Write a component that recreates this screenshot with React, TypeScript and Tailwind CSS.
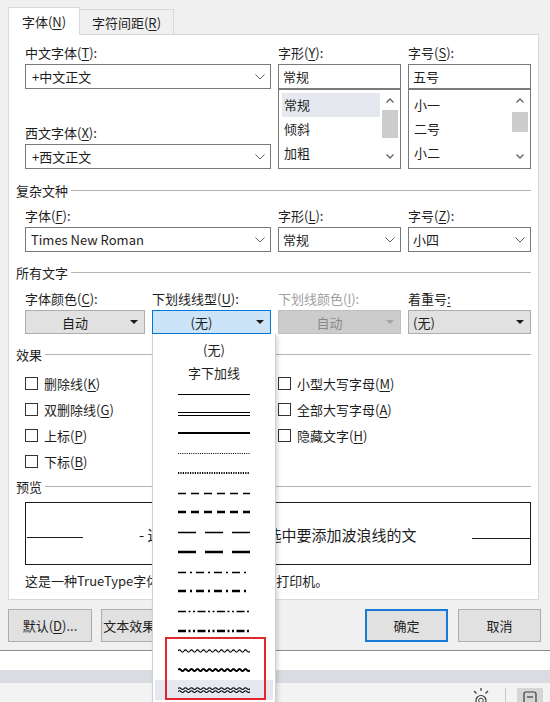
import React from 'react';

type Kind =
  | 'solid'
  | 'double'
  | 'thick'
  | 'dotted'
  | 'dottedHeavy'
  | 'dash'
  | 'dashHeavy'
  | 'long'
  | 'longHeavy'
  | 'dashDot'
  | 'dashDotHeavy'
  | 'dashDotDot'
  | 'dashDotDotHeavy'
  | 'wave'
  | 'waveHeavy'
  | 'waveDouble';

const kinds: Kind[] = [
  'solid',
  'double',
  'thick',
  'dotted',
  'dottedHeavy',
  'dash',
  'dashHeavy',
  'long',
  'longHeavy',
  'dashDot',
  'dashDotHeavy',
  'dashDotDot',
  'dashDotDotHeavy',
  'wave',
  'waveHeavy',
  'waveDouble',
];

// stroke width + dash pattern for the straight samples
const straight: Record<string, { w: number; y: number; d?: string }> = {
  solid: { w: 1, y: 4.5 },
  thick: { w: 2, y: 4 },
  dotted: { w: 1.2, y: 4.5, d: '1 1.2' },
  dottedHeavy: { w: 2, y: 4, d: '1.2 1.2' },
  dash: { w: 1.4, y: 4.5, d: '8 5' },
  dashHeavy: { w: 2.3, y: 4, d: '8 5' },
  long: { w: 1.4, y: 4.5, d: '18 9' },
  longHeavy: { w: 2.3, y: 4, d: '18 9' },
  dashDot: { w: 1.3, y: 4.5, d: '8 4 2 4' },
  dashDotHeavy: { w: 2.3, y: 4, d: '8 4 2 4' },
  dashDotDot: { w: 1.3, y: 4.5, d: '8 2.5 2 2.5 2 2.5' },
  dashDotDotHeavy: { w: 2.3, y: 4, d: '8 2.5 2 2.5 2 2.5' },
};

function wavePath(y: number, amp: number, period = 6, len = 72) {
  let d = `M0 ${y}`;
  for (let x = 0; x < len; x += period) {
    d += ` Q${x + period / 4} ${y - amp * 2} ${x + period / 2} ${y}`;
    d += ` Q${x + (3 * period) / 4} ${y + amp * 2} ${x + period} ${y}`;
  }
  return d;
}

function LineSample({ kind }: { kind: Kind }) {
  const s = '#000000';
  if (kind === 'double') {
    return (
      <svg width="72" height="8" viewBox="0 0 72 8">
        <line x1="0" y1="2.5" x2="72" y2="2.5" stroke={s} />
        <line x1="0" y1="5.5" x2="72" y2="5.5" stroke={s} />
      </svg>
    );
  }
  if (kind === 'wave' || kind === 'waveHeavy') {
    return (
      <svg width="72" height="8" viewBox="0 0 72 8">
        <path d={wavePath(4, 1.1)} fill="none" stroke={s} strokeWidth={kind === 'wave' ? 1.1 : 2} />
      </svg>
    );
  }
  if (kind === 'waveDouble') {
    return (
      <svg width="72" height="8" viewBox="0 0 72 8">
        <path d={wavePath(2.6, 0.9)} fill="none" stroke={s} strokeWidth={1.1} />
        <path d={wavePath(5.6, 0.9)} fill="none" stroke={s} strokeWidth={1.1} />
      </svg>
    );
  }
  const st = straight[kind];
  return (
    <svg width="72" height="8" viewBox="0 0 72 8">
      <line x1="0" y1={st.y} x2="72" y2={st.y} stroke={s} strokeWidth={st.w} strokeDasharray={st.d} />
    </svg>
  );
}

function U({ children }: { children: React.ReactNode }) {
  return <span className="underline decoration-1 underline-offset-2">{children}</span>;
}

function Label({ children, className = '' }: { children: React.ReactNode; className?: string }) {
  return <div className={`h-[17px] whitespace-nowrap leading-[17px] ${className}`}>{children}</div>;
}

function Chevron() {
  return (
    <svg width="10" height="6" viewBox="0 0 10 6">
      <path d="M0.5 0.5 L5 5 L9.5 0.5" fill="none" stroke="#5c5c5c" strokeWidth="1" />
    </svg>
  );
}

function Select({ value, pad }: { value: string; pad: string }) {
  return (
    <div className={`mt-[3px] flex h-[25px] items-center justify-between border border-[#7a7a7a] bg-white pr-[5px] leading-[17px] ${pad}`}>
      <span>{value}</span>
      <Chevron />
    </div>
  );
}

function SmallChevron({ up }: { up?: boolean }) {
  return (
    <svg width="8" height="5" viewBox="0 0 8 5">
      <path d={up ? 'M0.5 4.5 L4 1 L7.5 4.5' : 'M0.5 0.5 L4 4 L7.5 0.5'} fill="none" stroke="#606060" strokeWidth="1.3" />
    </svg>
  );
}

function ListBox({ items, thumb, selected }: { items: string[]; thumb: string; selected?: number }) {
  return (
    <div className="flex h-[80px] border border-[#7a7a7a] bg-white">
      <div className="flex-1 pl-[3px] pr-[2px] pt-[3px]">
        {items.map((it, i) => (
          <div key={it} className={`h-[24px] pl-[2px] leading-[23px] ${i === selected ? 'bg-[#e5e8ef]' : ''}`}>
            {it}
          </div>
        ))}
      </div>
      <div className="mr-[2px] flex w-[16px] flex-col pb-[3px] pt-[2px]">
        <div className="flex h-[17px] items-center justify-center">
          <SmallChevron up />
        </div>
        <div className="flex-1">
          <div className={`bg-[#cdcdcd] ${thumb}`} />
        </div>
        <div className="flex h-[17px] items-center justify-center">
          <SmallChevron />
        </div>
      </div>
    </div>
  );
}

function Header({ children, className = '' }: { children: React.ReactNode; className?: string }) {
  return (
    <div className={`flex h-[17px] items-center leading-[17px] ${className}`}>
      <span>{children}</span>
      <div className="ml-[3px] h-px flex-1 bg-[#b4b4b4]" />
    </div>
  );
}

function DropBtn({ text, variant = 'normal', left }: { text: string; variant?: 'normal' | 'active' | 'disabled'; left?: boolean }) {
  const cls =
    variant === 'active'
      ? 'border-[#0078d7] bg-[#cce4f7]'
      : variant === 'disabled'
        ? 'border-[#bfbfbf] bg-[#cccccc] text-[#8a8a8a]'
        : 'border-[#adadad] bg-[#e1e1e1]';
  return (
    <div className={`mt-[3px] flex h-[24px] items-center border leading-[17px] ${cls}`}>
      <span className={left ? 'flex-1 pl-[4px]' : 'flex-1 text-center'}>{text}</span>
      <span className="flex w-[20px] justify-center">
        <svg width="8" height="4" viewBox="0 0 8 4">
          <path d="M0 0 H8 L4 4 Z" fill={variant === 'disabled' ? '#a3a3a3' : '#1e1e1e'} />
        </svg>
      </span>
    </div>
  );
}

function Check({ children }: { children: React.ReactNode }) {
  return (
    <div className="flex h-[26px] items-center leading-[17px]">
      <span className="h-[13px] w-[13px] border border-[#333333] bg-white" />
      <span className="ml-[6px]">{children}</span>
    </div>
  );
}

function Dropdown() {
  return (
    <div className="absolute left-0 top-full z-20 h-[372px] w-[124px] border-x border-[#cfcfcf] bg-white pt-[4px] shadow-[2px_2px_4px_rgba(0,0,0,0.15)]">
      <div className="h-[23px] text-center leading-[23px]">(无)</div>
      <div className="h-[23px] text-center leading-[23px]">字下加线</div>
      {kinds.map(k => (
        <div
          key={k}
          className={`mx-[2px] flex h-[19.75px] items-center justify-center ${k === 'waveDouble' ? 'bg-[#e5e8ef]' : ''}`}
        >
          <LineSample kind={k} />
        </div>
      ))}
      {/* red highlight box around the wave styles */}
      <div className="absolute left-[12px] top-[303px] h-[63px] w-[101px] border-2 border-[#e3262e]" />
    </div>
  );
}

export default function App() {
  return (
    <div className="relative h-[702px] w-[550px] overflow-hidden bg-[#f0f0f0] font-['Noto_Sans_CJK_SC',sans-serif] text-[13px] text-[#1e1e1e]">
      {/* Tabs */}
      <div className="flex h-[34px] items-end pl-[8px]">
        <div className="relative z-10 -mb-px flex h-[28px] w-[72px] items-center justify-center border border-b-0 border-[#d9d9d9] bg-white leading-[17px]">
          字体(<U>N</U>)
        </div>
        <div className="flex h-[25px] w-[94px] items-center justify-center border-r border-t border-[#d9d9d9] leading-[17px]">
          字符间距(<U>R</U>)
        </div>
      </div>

      {/* Tab panel */}
      <div className="ml-[8px] w-[531px] border border-[#d9d9d9] bg-white px-[7px] pb-[10px] pt-[9px]">
        <div className="grid grid-cols-[246px_123px_123px] gap-x-[7px] pl-[9px]">
          <div>
            <Label>
              中文字体(<U>T</U>):
            </Label>
            <Select value="+中文正文" pad="pl-[6px]" />
            <Label className="mt-[35px]">
              西文字体(<U>X</U>):
            </Label>
            <Select value="+西文正文" pad="pl-[6px]" />
          </div>
          <div>
            <Label>
              字形(<U>Y</U>):
            </Label>
            <div className="mt-[3px] h-[25px] border border-[#7a7a7a] bg-white pl-[4px] leading-[23px]">常规</div>
            <ListBox items={['常规', '倾斜', '加粗']} thumb="mt-[1px] h-[28px]" selected={0} />
          </div>
          <div>
            <Label>
              字号(<U>S</U>):
            </Label>
            <div className="mt-[3px] h-[25px] border border-[#7a7a7a] bg-white pl-[4px] leading-[23px]">五号</div>
            <ListBox items={['小一', '二号', '小二']} thumb="mt-[3px] h-[20px]" />
          </div>
        </div>

        <Header className="mt-[13px]">复杂文种</Header>
        <div className="mt-[8px] grid grid-cols-[246px_123px_123px] gap-x-[7px] pl-[9px]">
          <div>
            <Label>
              字体(<U>F</U>):
            </Label>
            <Select value="Times New Roman" pad="pl-[5px]" />
          </div>
          <div>
            <Label>
              字形(<U>L</U>):
            </Label>
            <Select value="常规" pad="pl-[4px]" />
          </div>
          <div>
            <Label>
              字号(<U>Z</U>):
            </Label>
            <Select value="小四" pad="pl-[4px]" />
          </div>
        </div>

        <Header className="mt-[12px]">所有文字</Header>
        <div className="mt-[9px] grid grid-cols-[120px_119px_123px_123px] gap-x-[7px] pl-[9px]">
          <div>
            <Label>
              字体颜色(<U>C</U>):
            </Label>
            <DropBtn text="自动" />
          </div>
          <div className="relative">
            <Label>
              下划线线型(<U>U</U>):
            </Label>
            <DropBtn text="(无)" variant="active" />
            <Dropdown />
          </div>
          <div>
            <Label className="text-[#a0a0a0]">
              下划线颜色(<U>I</U>):
            </Label>
            <DropBtn text="自动" variant="disabled" />
          </div>
          <div>
            <Label>
              着重号<U>:</U>
            </Label>
            <DropBtn text="(无)" left />
          </div>
        </div>

        <Header className="mt-[12px]">效果</Header>
        <div className="mt-[7px] grid grid-cols-[246px_1fr] gap-x-[7px] pl-[9px]">
          <div>
            <Check>
              删除线(<U>K</U>)
            </Check>
            <Check>
              双删除线(<U>G</U>)
            </Check>
            <Check>
              上标(<U>P</U>)
            </Check>
            <Check>
              下标(<U>B</U>)
            </Check>
          </div>
          <div>
            <Check>
              小型大写字母(<U>M</U>)
            </Check>
            <Check>
              全部大写字母(<U>A</U>)
            </Check>
            <Check>
              隐藏文字(<U>H</U>)
            </Check>
          </div>
        </div>

        <Header className="mt-[4px]">预览</Header>
        <div className="ml-[9px] mt-[7px] flex h-[63px] w-[506px] items-center border border-[#1a1a1a]">
          <div className="ml-px mt-[8px] h-px w-[56px] bg-[#1a1a1a]" />
          <span className="ml-[56px] mt-[3px] whitespace-nowrap text-[15px] leading-[20px]">- 这是在 Word 文档选中要添加波浪线的文</span>
          <div className="flex-1" />
          <div className="mt-[10px] h-px w-[58px] bg-[#1a1a1a]" />
        </div>
        <div className="mt-[7px] h-[17px] pl-[9px] leading-[17px]">这是一种TrueType字体，同时适用于屏幕和打印机。</div>
      </div>

      {/* Dialog buttons */}
      <div className="mt-[9px] flex h-[33px] pl-[8px] pr-[9px] leading-[17px]">
        <div className="flex w-[84px] items-center justify-center border border-[#adadad] bg-[#e1e1e1]">
          默认(<U>D</U>)...
        </div>
        <div className="ml-[9px] flex w-[84px] items-center justify-center border border-[#adadad] bg-[#e1e1e1]">
          文本效果(<U>E</U>)...
        </div>
        <div className="flex-1" />
        <div className="flex w-[83px] items-center justify-center border-2 border-[#1979d6] bg-[#e1e1e1]">确定</div>
        <div className="ml-[10px] flex w-[83px] items-center justify-center border border-[#adadad] bg-[#e1e1e1]">取消</div>
      </div>

      {/* Word window behind the dialog */}
      <div className="mt-[8px] h-px bg-[#8c8c8c]" />
      <div className="h-[19px] bg-white" />
      <div className="h-[13px] bg-[#d9dce1]" />
      <div className="flex h-[19px] items-end justify-end bg-[#f3f3f3] pr-[7px]">
        <svg width="20" height="15" viewBox="0 0 20 15">
          <line x1="10" y1="1" x2="10" y2="4" stroke="#3a3a3a" strokeWidth="1.2" />
          <line x1="3" y1="4" x2="5.5" y2="6.5" stroke="#3a3a3a" strokeWidth="1.2" />
          <line x1="17" y1="4" x2="14.5" y2="6.5" stroke="#3a3a3a" strokeWidth="1.2" />
          <circle cx="10" cy="13.5" r="5" fill="none" stroke="#3a3a3a" strokeWidth="1.2" />
          <circle cx="10" cy="13.5" r="2.3" fill="none" stroke="#3a3a3a" strokeWidth="1" />
        </svg>
        <div className="ml-[14px] h-[14px] w-px bg-[#c8c8c8]" />
        <div className="ml-[11px] flex h-[14px] w-[26px] items-start justify-center bg-[#d6d6d6] pt-[3px]">
          <svg width="14" height="11" viewBox="0 0 14 11">
            <path d="M1 11 V3 Q1 1 3 1 H11 Q13 1 13 3 V11" fill="none" stroke="#3a3a3a" strokeWidth="1.2" />
            <line x1="4" y1="6" x2="10" y2="6" stroke="#3a3a3a" strokeWidth="1.2" />
          </svg>
        </div>
      </div>
    </div>
  );
}
